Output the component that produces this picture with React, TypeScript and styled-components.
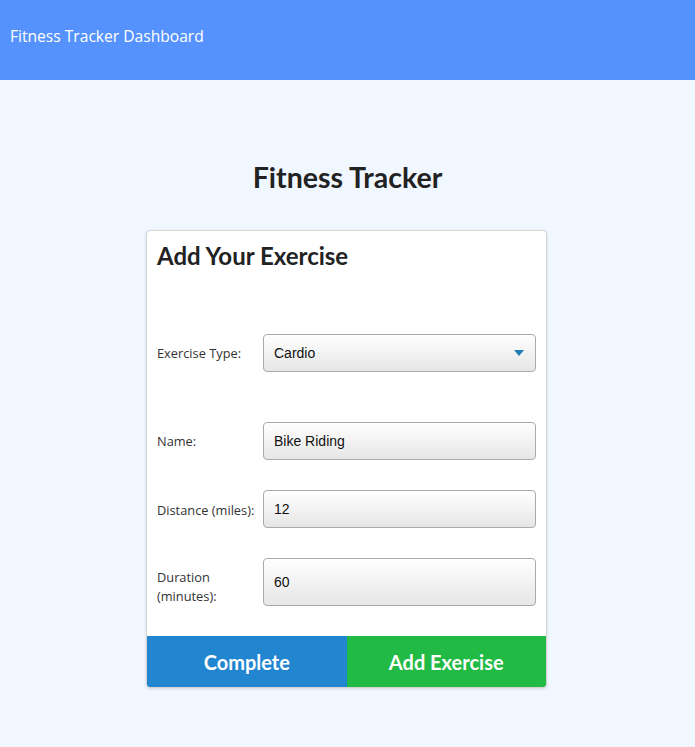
import React from 'react'
import styled, { createGlobalStyle } from 'styled-components'

const GlobalStyle = createGlobalStyle`
  html, body {
    margin: 0;
    padding: 0;
    background: #f0f7ff;
  }
  * { box-sizing: border-box; }
`

const TopBar = styled.header`
  height: 80px;
  background: #5592fe;
  color: #fff;
  display: flex;
  align-items: center;
  padding: 0 10px 8px;
  font-family: 'Open Sans', sans-serif;
  font-size: 15.6px;
`

const Main = styled.main`
  display: flex;
  flex-direction: column;
  align-items: center;
  padding-top: 80px;
  padding-bottom: 60px;
`

const PageTitle = styled.h1`
  margin: 0 0 36px;
  font-family: Lato, sans-serif;
  font-weight: 700;
  font-size: 28.5px;
  line-height: 34px;
  color: #222;
`

const Card = styled.section`
  width: 401px;
  margin-right: 2px;
  background: #fff;
  border: 1px solid #d4d4d5;
  border-radius: 4px;
  box-shadow: 0 1px 3px rgba(0, 0, 0, 0.12);
  overflow: hidden;
`

const CardTitle = styled.h2`
  margin: 0;
  padding: 10px 10px 0;
  font-family: Lato, sans-serif;
  font-weight: 700;
  font-size: 24px;
  line-height: 29px;
  color: #222;
`

const Form = styled.div`
  padding: 0 10px 30px;
`

const Row = styled.div<{ $top: number }>`
  display: grid;
  grid-template-columns: 106px 1fr;
  align-items: center;
  margin-top: ${p => p.$top}px;
`

const Label = styled.label<{ $shift?: number }>`
  padding-top: ${p => p.$shift ?? 0}px;
  font-family: 'Open Sans', sans-serif;
  font-size: 12.8px;
  line-height: 19px;
  color: #333;
`

const Field = styled.div<{ $h: number }>`
  position: relative;
  height: ${p => p.$h}px;
  border: 1px solid #aaa;
  border-radius: 4px;
  background: linear-gradient(#fff, #e6e6e6);
  display: flex;
  align-items: center;
  padding: 0 10px;
  font-family: 'Liberation Sans', Arial, sans-serif;
  font-size: 14px;
  color: #111;
`

const Caret = styled.span`
  position: absolute;
  right: 11px;
  top: 50%;
  margin-top: -3px;
  width: 0;
  height: 0;
  border-left: 5px solid transparent;
  border-right: 5px solid transparent;
  border-top: 6px solid #1d7fb5;
`

const Actions = styled.div`
  display: grid;
  grid-template-columns: 1fr 1fr;
`

const ActionButton = styled.button<{ $bg: string }>`
  height: 51px;
  border: 0;
  margin: 0;
  background: ${p => p.$bg};
  color: #fff;
  font-family: Lato, sans-serif;
  font-weight: 700;
  font-size: 20px;
  cursor: pointer;
`

export default function App() {
  return (
    <>
      <GlobalStyle />
      <TopBar>Fitness Tracker Dashboard</TopBar>
      <Main>
        <PageTitle>Fitness Tracker</PageTitle>
        <Card>
          <CardTitle>Add Your Exercise</CardTitle>
          <Form>
            <Row $top={64}>
              <Label>Exercise Type:</Label>
              <Field $h={38}>
                Cardio
                <Caret />
              </Field>
            </Row>
            <Row $top={50}>
              <Label>Name:</Label>
              <Field $h={38}>Bike Riding</Field>
            </Row>
            <Row $top={30}>
              <Label $shift={2}>Distance (miles):</Label>
              <Field $h={38}>12</Field>
            </Row>
            <Row $top={30}>
              <Label $shift={10}>Duration<br />(minutes):</Label>
              <Field $h={48}>60</Field>
            </Row>
          </Form>
          <Actions>
            <ActionButton $bg="#2185d0">Complete</ActionButton>
            <ActionButton $bg="#21ba45">Add Exercise</ActionButton>
          </Actions>
        </Card>
      </Main>
    </>
  )
}
